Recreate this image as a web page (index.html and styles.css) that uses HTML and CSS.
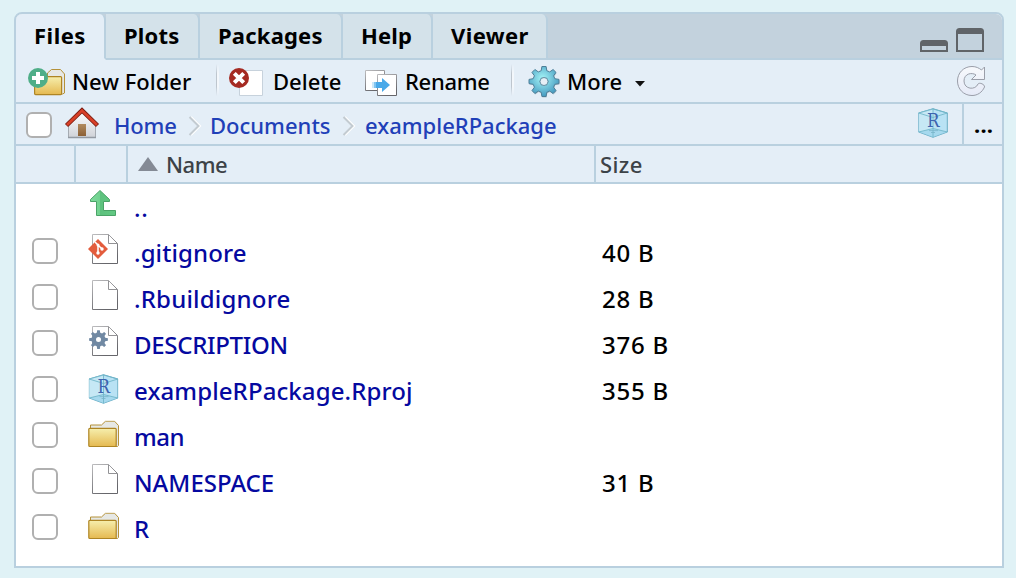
FILE: index.html
```html
<!DOCTYPE html>
<html lang="en">
<head>
<meta charset="utf-8">
<title>Files</title>
<link rel="stylesheet" href="styles.css">
</head>
<body>
<svg class="defs" width="0" height="0" aria-hidden="true">
  <defs>
    <linearGradient id="gold" x1="0" y1="0" x2="0" y2="1"><stop offset="0" stop-color="#f6efae"/><stop offset="1" stop-color="#e5b950"/></linearGradient>
    <linearGradient id="edge" x1="0" y1="0" x2="0.5" y2="1"><stop offset="0" stop-color="#bcbcbe"/><stop offset="1" stop-color="#66666b"/></linearGradient>
    <radialGradient id="teal" cx=".45" cy=".4" r=".6"><stop offset="0" stop-color="#a5f5f7"/><stop offset="1" stop-color="#459ac0"/></radialGradient>
    <linearGradient id="wall" x1="0" y1="0" x2="0" y2="1"><stop offset="0" stop-color="#fff"/><stop offset="1" stop-color="#cfd2d8"/></linearGradient>
    <linearGradient id="door" x1="0" y1="0" x2="0" y2="1"><stop offset="0" stop-color="#b18a5e"/><stop offset="1" stop-color="#8c6036"/></linearGradient>
    <linearGradient id="green" x1="0" y1="0" x2="1" y2="0"><stop offset="0" stop-color="#80da9d"/><stop offset=".38" stop-color="#70d18e"/><stop offset=".4" stop-color="#5dc17d"/><stop offset="1" stop-color="#62c983"/></linearGradient>
    <symbol id="doc" viewBox="0 0 32 32">
      <path d="M4.500 1.500h16l9 9v20h-25z" fill="#fff" stroke="url(#edge)"/>
      <path d="M20.500 1.500v9h9" fill="none" stroke="#929295"/>
    </symbol>
    <symbol id="folder" viewBox="0 0 32 28">
      <path d="M2.500 8V4.500H13.500L17.500 .7H26.500L30.500 5V25L29.500 26H26" fill="#e6e8e5" stroke="#b49139"/>
      <rect x=".8" y="7.800" width="27.400" height="18.200" rx="1" fill="url(#gold)" stroke="#ae8524" stroke-width="1.200"/>
    </symbol>
    <symbol id="cube" viewBox="0 0 30 30">
      <path d="M.7 5 15 .7 29.300 5v19L15 29.300.7 24z" fill="#b9e2f4" stroke="#69adc4"/>
      <path d="M15 .7v20L.7 24V5z" fill="#c9eaf5" opacity=".8"/>
      <path d="m15 20.500 14.300 3.500L15 29.300.7 24z" fill="#9bd4eb" opacity=".65"/>
      <path d="M.7 5 15 9.500 29.300 5M15 .7v28.600M.7 24 15 20.500 29.300 24M.7 5 15 1l14.300 4" fill="none" stroke="#72b7ca" stroke-width=".9"/>
      <path d="M11 22.600h9M13 24.500h4" stroke="#78b4c8" stroke-width=".8"/>
      <text x="15.200" y="19.300" text-anchor="middle" class="cube-letter" textLength="12.500" lengthAdjust="spacingAndGlyphs">R</text>
    </symbol>
    <symbol id="gear" viewBox="-16 -16 32 32">
      <path d="M-2.800-10.800-2.100-15 2.100-15 2.800-10.800 5.700-9.600 9.100-12 12-9.100 9.600-5.700 10.800-2.800 15-2.100 15 2.100 10.800 2.800 9.600 5.700 12 9.100 9.100 12 5.700 9.600 2.800 10.800 2.100 15-2.100 15-2.800 10.800-5.700 9.600-9.100 12-12 9.100-9.600 5.700-10.800 2.800-15 2.100-15-2.100-10.800-2.800-9.600-5.700-12-9.100-9.100-12-5.700-9.600ZM4 0A4 4 0 1 0-4 0 4 4 0 1 0 4 0Z" fill-rule="evenodd" stroke-linejoin="round"/>
    </symbol>
  </defs>
</svg>
<main class="panel">
  <div class="tabs">
    <div class="tab tab-files active">Files</div>
    <div class="tab tab-plots">Plots</div>
    <div class="tab tab-packages">Packages</div>
    <div class="tab tab-help">Help</div>
    <div class="tab tab-viewer">Viewer</div>
    <svg class="window-buttons" width="66" height="44" viewBox="920 14 66 44">
      <path d="M920 52v-8.500q0-3.500 3.500-3.500h21q3.500 0 3.500 3.500V52zM922 46v4h24v-4z" fill="#606468" fill-rule="evenodd"/>
      <path d="M956 52V31.500q0-3.500 3.500-3.500h21q3.500 0 3.500 3.500V52zM958 34v16h24V34z" fill="#606468" fill-rule="evenodd"/>
    </svg>
  </div>

  <div class="toolbar">
    <div class="button button-new">
      <svg width="37" height="42" viewBox="28 60 37 42">
        <path d="M47.500 76v-3l4-3.500h9l4 4.500v19l-2 1h-3" fill="#e6e8e5" stroke="#b49139"/>
        <rect x="34.600" y="76.600" width="27" height="18" rx="1" fill="url(#gold)" stroke="#ae8524" stroke-width="1.200"/>
        <circle cx="38" cy="78" r="10" fill="#4fae88"/>
        <path d="M38 72v12M32 78h12" stroke="#fff" stroke-width="4"/>
      </svg><span>New Folder</span>
    </div>
    <i class="separator"></i>
    <div class="button button-delete">
      <svg width="35" height="42" viewBox="229 60 35 42">
        <path d="M239.500 70.500h23v25h-23z" fill="#fff" stroke="#c7d2dc"/>
        <circle cx="239" cy="78" r="10" fill="#a52a22"/>
        <path d="m234.300 73.300 9.400 9.400m0-9.400-9.400 9.400" stroke="#fff" stroke-width="4"/>
      </svg><span>Delete</span>
    </div>
    <div class="button button-rename">
      <svg width="33" height="42" viewBox="365 60 33 42">
        <path d="M365.500 70.500h19v20h-19z" fill="#fff" stroke="url(#edge)"/>
        <path d="M377.500 74.500h19v21h-19z" fill="#fff" stroke="url(#edge)"/>
        <path d="M374 82h8v-4l8 7-8 7v-4h-8z" fill="#49a9e9"/>
        <path d="M372 82h4v6h-4z" fill="#a9d8f6" opacity=".6"/>
      </svg><span>Rename</span>
    </div>
    <i class="separator"></i>
    <div class="button button-more">
      <svg width="32" height="42" viewBox="528 60 32 42">
        <use href="#gear" x="528.500" y="66.500" width="32" height="32" fill="#829dac" opacity=".5"/>
        <use href="#gear" x="528" y="65.500" width="32" height="32" fill="url(#teal)" stroke="#4e7f98"/>
        <circle cx="544" cy="81.500" r="4" fill="#e6eff6" stroke="#6796aa"/>
      </svg><span>More</span>
      <svg class="caret" width="10" height="42" viewBox="634 60 10 42"><path d="M634 81h10l-5 5.500z" fill="#111"/></svg>
    </div>
    <svg class="refresh" width="31" height="42" viewBox="956 60 31 42">
      <defs><linearGradient id="silver" x1="0" y1="0" x2="0" y2="1"><stop offset="0" stop-color="#f7f9fc"/><stop offset="1" stop-color="#e5eaf7"/></linearGradient></defs>
      <path d="M984.500 67V79.500H971.500L976 75C972 72 964 73.500 964 81C964 89.500 975.500 90.500 978 84C979.500 82 985 84.500 984.500 87C982 92.500 977.500 95.500 972 95.500C963.500 95.500 957.500 89 957.500 81C957.500 73 963.500 66.500 972 66.500C976 66.500 979 68 981.500 70Z" fill="url(#silver)" stroke="#9a9ea9" stroke-linejoin="round"/>
    </svg>
  </div>

  <div class="path">
    <i class="checkbox"></i>
    <svg class="home" width="36" height="40" viewBox="64 104 36 40">
      <path d="M68.500 123 82 111l13.500 12v14.500h-27z" fill="url(#wall)" stroke="#a5abb2"/>
      <path d="M68 137.500h28" stroke="#939aa3" stroke-width="1.500"/>
      <path d="M78 124h8v12h-8z" fill="url(#door)"/>
      <path d="m66.500 125.500 15.500-15 15.500 15" fill="none" stroke="#7e2115" stroke-width="4.500"/>
      <path d="m67 125 15-14.500 15 14.500" fill="none" stroke="#d93f27" stroke-width="2.600"/>
    </svg>
    <span class="crumb crumb-home">Home</span>
    <svg class="chevron" width="14" height="40" viewBox="188 104 14 40"><path d="m191 117 9 9-9 9" fill="none" stroke="#fff" stroke-width="2"/><path d="m189.500 117 9 9-9 9" fill="none" stroke="#c3cbd1" stroke-width="2"/></svg>
    <span class="crumb crumb-documents">Documents</span>
    <svg class="chevron" width="14" height="40" viewBox="188 104 14 40"><path d="m191 117 9 9-9 9" fill="none" stroke="#fff" stroke-width="2"/><path d="m189.500 117 9 9-9 9" fill="none" stroke="#c3cbd1" stroke-width="2"/></svg>
    <span class="crumb crumb-package">exampleRPackage</span>
    <svg class="project" width="30" height="40" viewBox="0 -4 30 40"><use href="#cube" width="30" height="30"/></svg>
    <div class="browse">...</div>
  </div>

  <div class="columns">
    <div></div>
    <div></div>
    <div class="name-head"><svg width="20" height="14" viewBox="0 0 20 14"><path d="M10 0 20 14H0z" fill="#848a95"/></svg>Name</div>
    <div class="size-head">Size</div>
  </div>

  <div class="files">
    <div class="row up">
      <div></div>
      <svg width="50" height="44" viewBox="76 184 50 44"><path d="M100 190.500 109.500 199.500V201.500H103.500V210.500H115.500V215.500H96.500V201.500H90.500V199.500Z" fill="url(#green)" stroke="#4aa367" stroke-linejoin="round"/></svg>
      <span class="name n-up">..</span><span class="size"></span>
    </div>
    <div class="row">
      <div><i class="checkbox"></i></div>
      <svg width="50" height="46" viewBox="76 0 50 46"><use href="#doc" x="88" y="5" width="32" height="32"/><path d="m98 11 10 10-10 10-10-10z" fill="#e35c3d"/><path d="m95 14 3 3v9m0-9 3.500 3.500" fill="none" stroke="#fff" stroke-width="1.500"/><circle cx="98" cy="17" r="1.500" fill="#fff"/><circle cx="98" cy="25" r="1.700" fill="#fff"/><circle cx="102" cy="21" r="1.700" fill="#fff"/></svg>
      <span class="name n-git">.gitignore</span><span class="size">40 B</span>
    </div>
    <div class="row">
      <div><i class="checkbox"></i></div>
      <svg width="50" height="46" viewBox="76 0 50 46"><use href="#doc" x="88" y="5" width="32" height="32"/></svg>
      <span class="name n-build">.Rbuildignore</span><span class="size">28 B</span>
    </div>
    <div class="row">
      <div><i class="checkbox"></i></div>
      <svg width="50" height="46" viewBox="76 0 50 46"><use href="#doc" x="88" y="5" width="32" height="32"/><circle cx="98.500" cy="19.500" r="4" fill="#fff"/><use href="#gear" x="88.500" y="9.500" width="20" height="20" fill="#7189a3"/></svg>
      <span class="name n-desc">DESCRIPTION</span><span class="size">376 B</span>
    </div>
    <div class="row">
      <div><i class="checkbox"></i></div>
      <svg width="50" height="46" viewBox="76 0 50 46"><use href="#cube" x="88.500" y="8" width="30" height="30"/></svg>
      <span class="name n-proj">exampleRPackage.Rproj</span><span class="size">355 B</span>
    </div>
    <div class="row">
      <div><i class="checkbox"></i></div>
      <svg width="50" height="46" viewBox="76 0 50 46"><use href="#folder" x="88" y="8.500" width="32" height="28"/></svg>
      <span class="name n-man">man</span><span class="size"></span>
    </div>
    <div class="row">
      <div><i class="checkbox"></i></div>
      <svg width="50" height="46" viewBox="76 0 50 46"><use href="#doc" x="88" y="5" width="32" height="32"/></svg>
      <span class="name n-space">NAMESPACE</span><span class="size">31 B</span>
    </div>
    <div class="row">
      <div><i class="checkbox"></i></div>
      <svg width="50" height="46" viewBox="76 0 50 46"><use href="#folder" x="88" y="8.500" width="32" height="28"/></svg>
      <span class="name">R</span><span class="size"></span>
    </div>
  </div>
</main>
</body>
</html>
```
FILE: styles.css
```css
* { box-sizing: border-box; }
body {
  margin: 0;
  padding: 12px 12px 10px 14px;
  height: 578px;
  overflow: hidden;
  background: #e0f2f6;
  font: 500 22px "Noto Sans", "Open Sans", sans-serif;
  color: #000;
}
svg { display: block; flex: none; }
.defs { position: absolute; }
.panel {
  width: 990px;
  height: 556px;
  border: 2px solid #b9d0df;
  border-radius: 8px 8px 0 0;
  background: #fff;
  overflow: hidden;
}
.tabs {
  display: flex;
  height: 46px;
  background: #c3d2dd;
  box-shadow: inset 0 -2px #b9d0df;
}
.tab {
  height: 46px;
  line-height: 42px;
  padding-left: 18px;
  font-weight: 700;
  letter-spacing: 0.2px;
  white-space: nowrap;
  background: #d4e2ea;
  border-right: 2px solid #b9d0df;
  border-bottom: 2px solid #b9d0df;
  border-top-right-radius: 6px;
}
.tab.active { background: #e4eef7; border-bottom-color: #e4eef7; }
.tab-files { width: 90px; letter-spacing: 0.5px; }
.tab-plots { width: 94px; }
.tab-packages { width: 143px; }
.tab-help { width: 90px; }
.tab-viewer { width: 115px; letter-spacing: 0.4px; }
.window-buttons { margin-left: auto; margin-right: 16px; }

.toolbar, .path {
  display: flex;
  background: #e4eef7;
  border-bottom: 2px solid #b9d0df;
}
.toolbar { height: 44px; padding-left: 12px; line-height: 42px; }
.button { display: flex; flex: none; white-space: nowrap; }
.button-new { width: 187px; gap: 7px; }
.button-delete { width: 136px; gap: 9px; margin-left: 10px; }
.button-rename { width: 145px; gap: 7px; letter-spacing: -0.3px; }
.button-more { gap: 7px; margin-left: 14px; }
.caret { margin-left: 6px; }
.separator {
  flex: none;
  width: 4px;
  height: 32px;
  margin-top: 4px;
  background: linear-gradient(90deg, transparent 0 25%, #bec6ce 25% 50%, #f3f7fb 50%);
  mask-image: linear-gradient(transparent, #000 30% 70%, transparent);
}
.separator + .button-delete { margin-left: 10px; }
.refresh { margin-left: auto; margin-right: 15px; }

.path { height: 42px; line-height: 42px; color: #1f40b8; }
.checkbox {
  display: block;
  flex: none;
  width: 26px;
  height: 26px;
  border: 2px solid #b0b0b0;
  border-radius: 6px;
  background: #fff;
}
.path .checkbox { margin: 8px 12px 0 10px; }
.crumb { flex: none; white-space: nowrap; }
.crumb-home { width: 74px; margin-left: 14px; letter-spacing: -0.2px; }
.crumb-documents { width: 132px; margin-left: 8px; }
.crumb-package { margin-left: 9px; }
.project { margin-left: auto; margin-right: 14px; }
.browse {
  width: 40px;
  padding-left: 10px;
  border-left: 2px solid #b9d0df;
  color: #000;
  font-weight: 700;
  line-height: 40px;
  letter-spacing: 0.2px;
}
.cube-letter { font: 19px "DejaVu Serif", serif; fill: #3d64ae; }

.columns {
  display: grid;
  grid-template-columns: 60px 52px 468px 1fr;
  height: 38px;
  line-height: 36px;
  background: #e4eef7;
  border-bottom: 2px solid #b9d0df;
  color: #3c4247;
}
.columns > div { border-right: 2px solid #b9d0df; white-space: nowrap; }
.columns > div:last-child { border-right: 0; }
.name-head { display: flex; gap: 8px; padding-left: 10px; letter-spacing: -0.5px; }
.name-head svg { margin-top: 11px; }
.columns > .size-head { padding-left: 4px; letter-spacing: 0.4px; }

.row {
  display: grid;
  grid-template-columns: 60px 50px 468px 1fr;
  height: 46px;
  font-size: 24px;
  line-height: 46px;
}
.row.up { height: 44px; }
.row .checkbox { margin: 10px 0 0 16px; }
.name { padding: 2px 0 0 8px; color: #0509a0; white-space: nowrap; }
.n-up { padding-top: 1px; letter-spacing: 0.8px; }
.n-git { letter-spacing: 0.1px; }
.n-build { letter-spacing: 0.2px; }
.n-desc { letter-spacing: -0.3px; }
.n-proj { letter-spacing: 0.1px; }
.n-man { letter-spacing: -0.5px; }
.size { padding: 2px 0 0 8px; letter-spacing: 0.8px; white-space: nowrap; }
```
